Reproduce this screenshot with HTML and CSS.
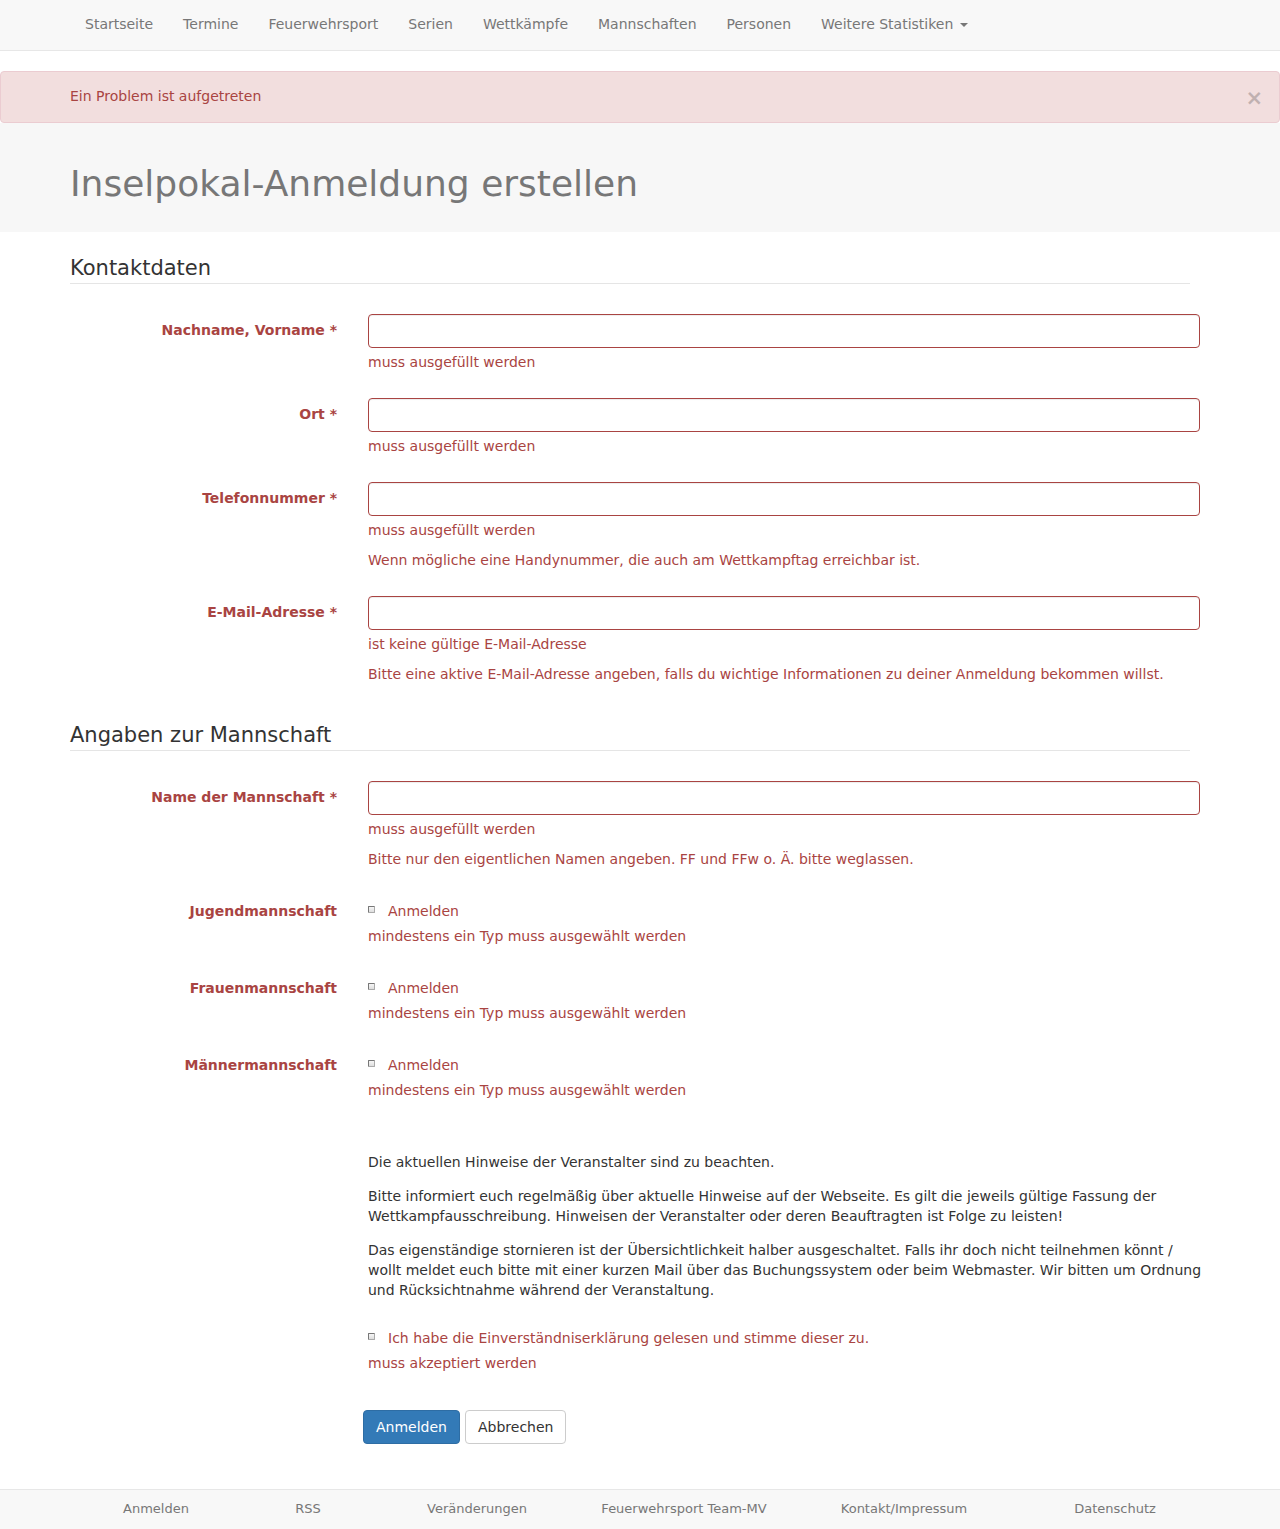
FILE: index.html
```html
<!DOCTYPE html>
<html lang="de">
<head>
<meta charset="utf-8">
<title>Inselpokal-Anmeldung erstellen</title>
<link rel="stylesheet" href="styles.css">
</head>
<body>
<nav class="navbar">
  <ul class="nav">
    <li><a href="#">Startseite</a></li>
    <li><a href="#">Termine</a></li>
    <li><a href="#">Feuerwehrsport</a></li>
    <li><a href="#">Serien</a></li>
    <li><a href="#">Wettkämpfe</a></li>
    <li><a href="#">Mannschaften</a></li>
    <li><a href="#">Personen</a></li>
    <li><a href="#">Weitere Statistiken <span class="caret"></span></a></li>
  </ul>
</nav>

<div class="alert">
  <div class="alert-inner">Ein Problem ist aufgetreten</div>
  <button class="close" type="button">×</button>
</div>

<header class="page-head">
  <h1>Inselpokal-Anmeldung erstellen</h1>
</header>

<main class="container">
  <form class="form">
    <fieldset class="fieldset">
      <legend class="legend">Kontaktdaten</legend>
      <div class="group">
        <label class="clabel">Nachname, Vorname *</label>
        <div class="field">
          <input class="input" type="text">
          <p class="help">muss ausgefüllt werden</p>
        </div>
      </div>
      <div class="group">
        <label class="clabel">Ort *</label>
        <div class="field">
          <input class="input" type="text">
          <p class="help">muss ausgefüllt werden</p>
        </div>
      </div>
      <div class="group">
        <label class="clabel">Telefonnummer *</label>
        <div class="field">
          <input class="input" type="text">
          <p class="help">muss ausgefüllt werden</p>
          <p class="help">Wenn mögliche eine Handynummer, die auch am Wettkampftag erreichbar ist.</p>
        </div>
      </div>
      <div class="group">
        <label class="clabel">E-Mail-Adresse *</label>
        <div class="field">
          <input class="input" type="text">
          <p class="help">ist keine gültige E-Mail-Adresse</p>
          <p class="help">Bitte eine aktive E-Mail-Adresse angeben, falls du wichtige Informationen zu deiner Anmeldung bekommen willst.</p>
        </div>
      </div>
    </fieldset>

    <fieldset class="fieldset">
      <legend class="legend">Angaben zur Mannschaft</legend>
      <div class="group">
        <label class="clabel">Name der Mannschaft *</label>
        <div class="field">
          <input class="input" type="text">
          <p class="help">muss ausgefüllt werden</p>
          <p class="help">Bitte nur den eigentlichen Namen angeben. FF und FFw o. Ä. bitte weglassen.</p>
        </div>
      </div>
      <div class="group">
        <label class="clabel">Jugendmannschaft</label>
        <div class="field">
          <label class="check"><input class="cb" type="checkbox"> Anmelden</label>
          <p class="help">mindestens ein Typ muss ausgewählt werden</p>
        </div>
      </div>
      <div class="group">
        <label class="clabel">Frauenmannschaft</label>
        <div class="field">
          <label class="check"><input class="cb" type="checkbox"> Anmelden</label>
          <p class="help">mindestens ein Typ muss ausgewählt werden</p>
        </div>
      </div>
      <div class="group">
        <label class="clabel">Männermannschaft</label>
        <div class="field">
          <label class="check"><input class="cb" type="checkbox"> Anmelden</label>
          <p class="help">mindestens ein Typ muss ausgewählt werden</p>
        </div>
      </div>
    </fieldset>

    <div class="group notes-group">
      <div class="spacer"></div>
      <div class="field notes">
        <p class="note">Die aktuellen Hinweise der Veranstalter sind zu beachten.</p>
        <p class="note">Bitte informiert euch regelmäßig über aktuelle Hinweise auf der Webseite. Es gilt die jeweils gültige Fassung der Wettkampfausschreibung. Hinweisen der Veranstalter oder deren Beauftragten ist Folge zu leisten!</p>
        <p class="note">Das eigenständige stornieren ist der Übersichtlichkeit halber ausgeschaltet. Falls ihr doch nicht teilnehmen könnt / wollt meldet euch bitte mit einer kurzen Mail über das Buchungssystem oder beim Webmaster. Wir bitten um Ordnung und Rücksichtnahme während der Veranstaltung.</p>
      </div>
    </div>
    <div class="group">
      <div class="spacer"></div>
      <div class="field">
        <label class="check"><input class="cb" type="checkbox"> Ich habe die Einverständniserklärung gelesen und stimme dieser zu.</label>
        <p class="help">muss akzeptiert werden</p>
      </div>
    </div>
    <div class="group">
      <div class="spacer"></div>
      <div class="field actions">
        <button class="btn btn-primary" type="button">Anmelden</button>
        <button class="btn btn-default" type="button">Abbrechen</button>
      </div>
    </div>
  </form>
</main>

<footer class="footer">
  <ul class="footer-nav">
    <li><a href="#">Anmelden</a></li>
    <li><a href="#">RSS</a></li>
    <li><a href="#">Veränderungen</a></li>
    <li><a href="#">Feuerwehrsport Team-MV</a></li>
    <li><a href="#">Kontakt/Impressum</a></li>
    <li><a href="#">Datenschutz</a></li>
  </ul>
</footer>
</body>
</html>
```

FILE: styles.css
```css
* { box-sizing: border-box; }
html, body { margin: 0; padding: 0; }
body {
  font-family: "DejaVu Sans", "Liberation Sans", sans-serif;
  font-size: 14px;
  line-height: 20px;
  color: #333;
  background: #fff;
}
a { text-decoration: none; }

.navbar {
  height: 51px;
  background: #f8f8f8;
  border-bottom: 1px solid #e7e7e7;
  margin-bottom: 20px;
}
.nav {
  list-style: none;
  margin: 0;
  padding: 0 0 0 70px;
  display: flex;
}
.nav a {
  display: block;
  padding: 14px 15px 16px;
  line-height: 20px;
  color: #777;
}
.caret {
  display: inline-block;
  width: 0;
  height: 0;
  margin-left: 2px;
  vertical-align: middle;
  border-top: 4px solid #777;
  border-left: 4px solid transparent;
  border-right: 4px solid transparent;
}

.alert {
  position: relative;
  background: #f2dede;
  border: 1px solid #ebccd1;
  border-radius: 4px;
  color: #a94442;
  padding: 14px 0 16px;
}
.alert-inner {
  padding-left: 69px;
}
.close {
  position: absolute;
  right: 16px;
  top: 16px;
  border: 0;
  background: transparent;
  padding: 0;
  font-family: "DejaVu Sans", sans-serif;
  font-size: 21px;
  font-weight: bold;
  line-height: 21px;
  color: #000;
  opacity: 0.2;
  cursor: pointer;
}

.page-head {
  background: #f7f7f7;
  padding: 41px 70px 28px;
}
.page-head h1 {
  margin: 0;
  font-size: 36px;
  font-weight: 500;
  line-height: 40px;
  color: #777;
}

.container {
  width: 1140px;
  margin: 0 0 0 70px;
  padding: 21px 0 30px;
}
.fieldset {
  border: 0;
  margin: 0 0 10px;
  padding: 0;
  min-width: 0;
}
.legend {
  display: block;
  width: 1120px;
  padding: 0;
  margin: 0 0 30px;
  font-size: 21px;
  line-height: 30px;
  color: #333;
  border-bottom: 1px solid #e5e5e5;
}
.group {
  display: grid;
  grid-template-columns: 267px 832px;
  column-gap: 31px;
  margin-bottom: 15px;
}
.clabel {
  padding-top: 6px;
  padding-bottom: 1px;
  text-align: right;
  font-weight: bold;
  color: #a94442;
}
.field {
  display: flow-root;
}
.notes {
  margin-right: -10px;
}
.input {
  display: block;
  width: 100%;
  height: 34px;
  padding: 6px 12px;
  font: inherit;
  border: 1px solid #a94442;
  border-radius: 4px;
  background: #fff;
  box-shadow: inset 0 1px 1px rgba(0,0,0,.075);
}
.help {
  margin: 4px 0 9px;
  padding-bottom: 1px;
  color: #a94442;
}
.help:last-child {
  margin-bottom: 10px;
}
.check {
  display: block;
  position: relative;
  padding: 6px 0 1px 20px;
  min-height: 27px;
  color: #a94442;
}
.cb {
  -webkit-appearance: none;
  appearance: none;
  position: absolute;
  left: 0;
  top: 11px;
  width: 7px;
  height: 7px;
  margin: 0;
  border: 1px solid #777;
  border-right-color: #aaa;
  border-bottom-color: #aaa;
  border-radius: 1px;
  background: linear-gradient(#f6f6f6, #dedede);
}
.notes-group {
  margin-top: 26px;
  margin-bottom: 22px;
}
.note {
  margin: 0 0 14px;
}
.note:last-child { margin-bottom: 0; }
.actions {
  margin-left: -5px;
  padding-top: 11px;
  display: flex;
  gap: 5px;
}
.btn {
  display: inline-block;
  height: 34px;
  padding: 6px 12px;
  font: inherit;
  line-height: 20px;
  border: 1px solid transparent;
  border-radius: 4px;
  cursor: pointer;
}
.btn-primary {
  color: #fff;
  background: #337ab7;
  border-color: #2e6da4;
}
.btn-default {
  color: #333;
  background: #fff;
  border-color: #ccc;
}

.footer {
  background: #f8f8f8;
  border-top: 1px solid #e7e7e7;
  height: 40px;
}
.footer-nav {
  list-style: none;
  margin: 0 0 0 70px;
  padding: 0;
  width: 1140px;
  display: grid;
  grid-template-columns: 172px 132px 206px 208px 232px 190px;
}
.footer-nav li {
  text-align: center;
}
.footer-nav a {
  display: block;
  font-size: 13px;
  line-height: 18px;
  padding: 10px 0;
  color: #777;
}
```
